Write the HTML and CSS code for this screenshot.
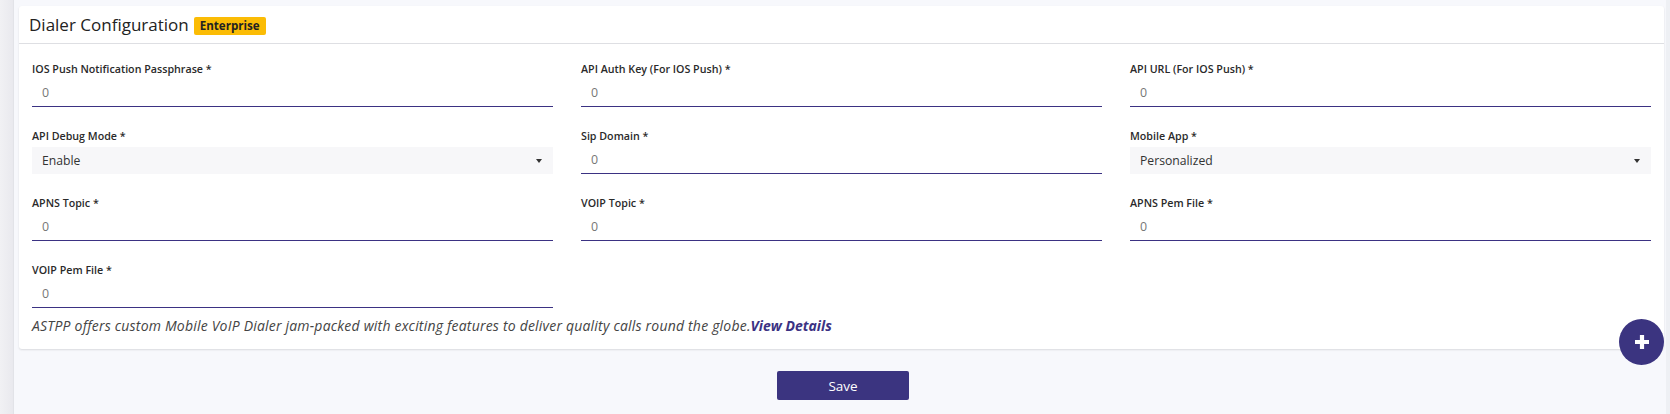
FILE: index.html
```html
<!DOCTYPE html>
<html lang="en">
<head>
<meta charset="utf-8">
<title>Dialer Configuration</title>
<link rel="stylesheet" href="styles.css">
</head>
<body>
<div class="page">
  <aside class="rail"></aside>
  <main class="main">
    <section class="card">
      <header class="card-head">
        <h2 class="card-title">Dialer Configuration</h2>
        <span class="badge">Enterprise</span>
      </header>
      <div class="card-body">
        <div class="grid">
          <div class="field">
            <label class="label">IOS Push Notification Passphrase *</label>
            <div class="input">0</div>
          </div>
          <div class="field">
            <label class="label">API Auth Key (For IOS Push) *</label>
            <div class="input">0</div>
          </div>
          <div class="field">
            <label class="label">API URL (For IOS Push) *</label>
            <div class="input">0</div>
          </div>
          <div class="field">
            <label class="label">API Debug Mode *</label>
            <div class="select">Enable<span class="caret"></span></div>
          </div>
          <div class="field">
            <label class="label">Sip Domain *</label>
            <div class="input">0</div>
          </div>
          <div class="field">
            <label class="label">Mobile App *</label>
            <div class="select">Personalized<span class="caret"></span></div>
          </div>
          <div class="field">
            <label class="label">APNS Topic *</label>
            <div class="input">0</div>
          </div>
          <div class="field">
            <label class="label">VOIP Topic *</label>
            <div class="input">0</div>
          </div>
          <div class="field">
            <label class="label">APNS Pem File *</label>
            <div class="input">0</div>
          </div>
          <div class="field">
            <label class="label">VOIP Pem File *</label>
            <div class="input">0</div>
          </div>
        </div>
        <p class="note">ASTPP offers custom Mobile VoIP Dialer jam-packed with exciting features to deliver quality calls round the globe.<a class="note-link" href="#">View Details</a></p>
      </div>
    </section>
    <div class="actions">
      <button class="btn-save" type="button">Save</button>
    </div>
  </main>
  <div class="scroll-rail"></div>
  <button class="fab" type="button" aria-label="Add">
    <svg width="18" height="18" viewBox="0 0 18 18"><path d="M9 2v14M2 9h14" stroke="#fff" stroke-width="4.2" stroke-linecap="butt"/></svg>
  </button>
</div>
</body>
</html>
```

FILE: styles.css
```css
* { box-sizing: border-box; }
html, body { margin: 0; padding: 0; }
body {
  font-family: "Open Sans", "Liberation Sans", sans-serif;
  background: #f7f8fc;
  color: #333;
  width: 1670px;
  height: 414px;
  overflow: hidden;
}
.page {
  display: flex;
  height: 414px;
  position: relative;
}
.rail {
  width: 14px;
  flex: none;
  background: linear-gradient(to right, #f1f1f4, #e9e9ee);
  border-right: 1px solid #e2e3e8;
}
.main {
  flex: 1;
  padding: 6px 2px 0 5px;
  display: flex;
  flex-direction: column;
}
.scroll-rail {
  width: 4px;
  flex: none;
  background: #eef0f4;
}
.card {
  background: #fff;
  border-radius: 3px;
  box-shadow: 0 1px 2px rgba(0,0,0,0.12);
}
.card-head {
  height: 38px;
  display: flex;
  align-items: center;
  padding: 0 10px;
  border-bottom: 1px solid #dedfe3;
}
.card-title {
  margin: 0;
  font-size: 17px;
  font-weight: 400;
  color: #222;
}
.badge {
  margin-left: 5px;
  margin-top: 3px;
  height: 18px;
  line-height: 18px;
  padding: 0 6px;
  background: #fbbc05;
  color: #222;
  font-size: 11.6px;
  font-weight: 700;
  border-radius: 2px;
}
.card-body {
  padding: 18px 13px 14px 13px;
}
.grid {
  display: grid;
  grid-template-columns: repeat(3, 1fr);
  column-gap: 28px;
  row-gap: 22px;
}
.field {
  display: flex;
  flex-direction: column;
}
.label {
  display: block;
  height: 14px;
  line-height: 14px;
  margin-bottom: 4px;
  font-size: 10.7px;
  font-weight: 600;
  color: #2a2a2a;
  white-space: nowrap;
}
.input {
  height: 27px;
  line-height: 26px;
  padding: 0 10px;
  border-bottom: 1px solid #3b3283;
  font-size: 12.4px;
  color: #777;
}
.select {
  position: relative;
  height: 27px;
  line-height: 27px;
  padding: 0 10px;
  background: #f7f7f9;
  font-size: 12.2px;
  color: #333;
}
.caret {
  position: absolute;
  right: 11px;
  top: 12px;
  width: 0;
  height: 0;
  border-left: 3.5px solid transparent;
  border-right: 3.5px solid transparent;
  border-top: 4px solid #333;
}
.note {
  margin: 8px 0 0 0;
  font-size: 14px;
  line-height: 19px;
  letter-spacing: 0.2px;
  font-style: italic;
  color: #444;
}
.note-link {
  color: #3b3283;
  font-weight: 700;
  text-decoration: none;
  letter-spacing: 0;
}
.actions {
  display: flex;
  justify-content: center;
  margin-top: 22px;
  padding-left: 3px;
}
.btn-save {
  width: 132px;
  height: 29px;
  border: none;
  border-radius: 2px;
  background: #3b3480;
  color: #fff;
  font-family: inherit;
  font-size: 13.5px;
}
.fab {
  position: absolute;
  left: 1619px;
  top: 319px;
  width: 45px;
  height: 46px;
  border-radius: 50%;
  border: none;
  padding: 0;
  background: #3b3480;
  display: flex;
  align-items: center;
  justify-content: center;
}
.fab svg { display: block; }
```
